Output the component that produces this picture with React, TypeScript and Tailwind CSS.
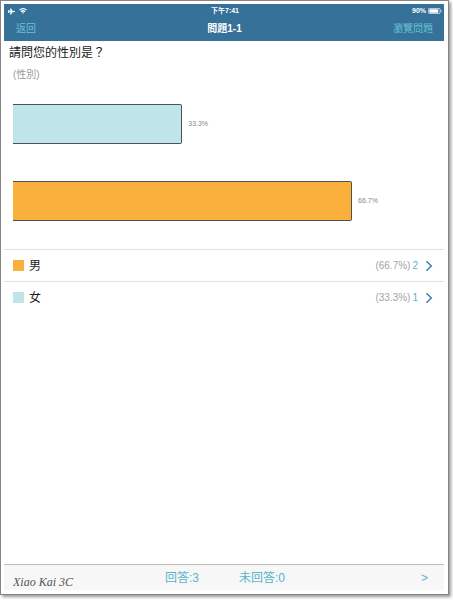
import { FaPlane } from "react-icons/fa";

type Answer = {
  label: string;
  percent: number;
  count: number;
  color: string;
};

const answers: Answer[] = [
  { label: "男", percent: 66.7, count: 2, color: "bg-[#fbb03b]" },
  { label: "女", percent: 33.3, count: 1, color: "bg-[#bfe4ea]" },
];

// value at the right edge of the chart
const AXIS_MAX = 84.8;

const StatusBar = () => (
  <div className="grid h-3 grid-cols-3 items-center pl-1 pr-0.5 text-[7px] leading-3 text-white">
    <div className="flex items-center gap-1">
      <FaPlane className="size-[7px]" />
      <svg viewBox="0 0 16 12" className="h-[6px] w-2" fill="none" stroke="currentColor" strokeWidth="2.4">
        <path d="M1 4.2a10 10 0 0 1 14 0" />
        <path d="M4 7.4a5.8 5.8 0 0 1 8 0" />
        <path d="M6 9.2L8 12l2-2.8a3 3 0 0 0-4 0z" fill="currentColor" stroke="none" />
      </svg>
    </div>
    <span className="text-center font-bold">下午7:41</span>
    <div className="flex items-center justify-end gap-0.5">
      <span className="font-bold">90%</span>
      <svg viewBox="0 0 28 12" className="h-[6px] w-[14px]">
        <rect x="0.8" y="0.8" width="23.4" height="10.4" rx="2" fill="none" stroke="#fff" strokeWidth="1.4" />
        <rect x="2.6" y="2.6" width="18" height="6.8" rx="0.8" fill="#fff" />
        <path d="M25.6 3.8c2 .4 2 4 0 4.4z" fill="#fff" />
      </svg>
    </div>
  </div>
);

const BarChart = () => (
  <div className="flex flex-col gap-[37px] pl-[9px]">
    {[...answers].reverse().map((item) => (
      <div key={item.label} className="flex items-center gap-1.5">
        <div
          className={`h-10 shrink-0 rounded-r-xs border border-l-0 border-[#4d5256] ${item.color}`}
          style={{ width: `${(item.percent / AXIS_MAX) * 100}%` }}
        />
        <span className="text-[7px] leading-3 text-[#888]">{item.percent}%</span>
      </div>
    ))}
  </div>
);

const AnswerList = () => (
  <ul className="mt-7">
    {answers.map((item) => (
      <li key={item.label} className="border-t border-[#e2e2e2]">
        <a href="#" className="flex h-[31px] items-center pl-[9px] pr-3">
          <span className={`size-[11px] ${item.color}`} />
          <span className="ml-[5px] text-xs text-[#222]">{item.label}</span>
          <span className="ml-auto text-[10px] text-[#a3a3a3]">({item.percent}%)</span>
          <span className="ml-0.5 text-[10px] text-[#5ab4ca]">{item.count}</span>
          <svg
            viewBox="0 0 6 10"
            className="ml-2 h-[10px] w-[6px] overflow-visible"
            fill="none"
            stroke="#3d7fad"
            strokeWidth="1.5"
          >
            <path d="M0.5 0.3L5.3 5L0.5 9.7" />
          </svg>
        </a>
      </li>
    ))}
  </ul>
);

const App = () => {
  return (
    <div className="flex min-h-screen flex-col bg-white pb-[5px] pr-1 font-['Liberation_Sans','Noto_Sans_CJK_TC',sans-serif]">
      <div className="flex grow flex-col border border-[#858585] pb-1 pl-[3px] pr-1 pt-[3px] shadow-[2px_2px_3px_#999]">
        <header className="bg-[#367199] pb-1 pt-px">
          <StatusBar />
          <nav className="mt-1 grid h-4 grid-cols-3 items-center pl-3 pr-[11px] text-[10px] leading-4 text-[#66c2d4]">
            <button className="justify-self-start">返回</button>
            <h1 className="text-center font-bold text-white">問題1-1</h1>
            <button className="justify-self-end">瀏覽問題</button>
          </nav>
        </header>

        <main className="grow">
          <h2 className="px-[5px] pt-0.5 text-xs leading-5 text-[#222]">請問您的性別是？</h2>
          <p className="mb-[17px] px-[9px] text-[10px] leading-6 text-[#999]">(性別)</p>
          <BarChart />
          <AnswerList />
        </main>

        <footer className="flex h-[26px] items-center border-t border-[#bdbdbd] bg-[#f7f7f7] pl-[9px] pr-4 text-xs text-[#5ab4ca]">
          <span className="w-38 pt-2 font-['Z003','URW_Chancery_L','Liberation_Serif',serif] italic leading-4 text-[#555]">
            Xiao Kai 3C
          </span>
          <span>回答:3</span>
          <span className="ml-10">未回答:0</span>
          <button className="ml-auto">&gt;</button>
        </footer>
      </div>
    </div>
  );
};

export default App;
